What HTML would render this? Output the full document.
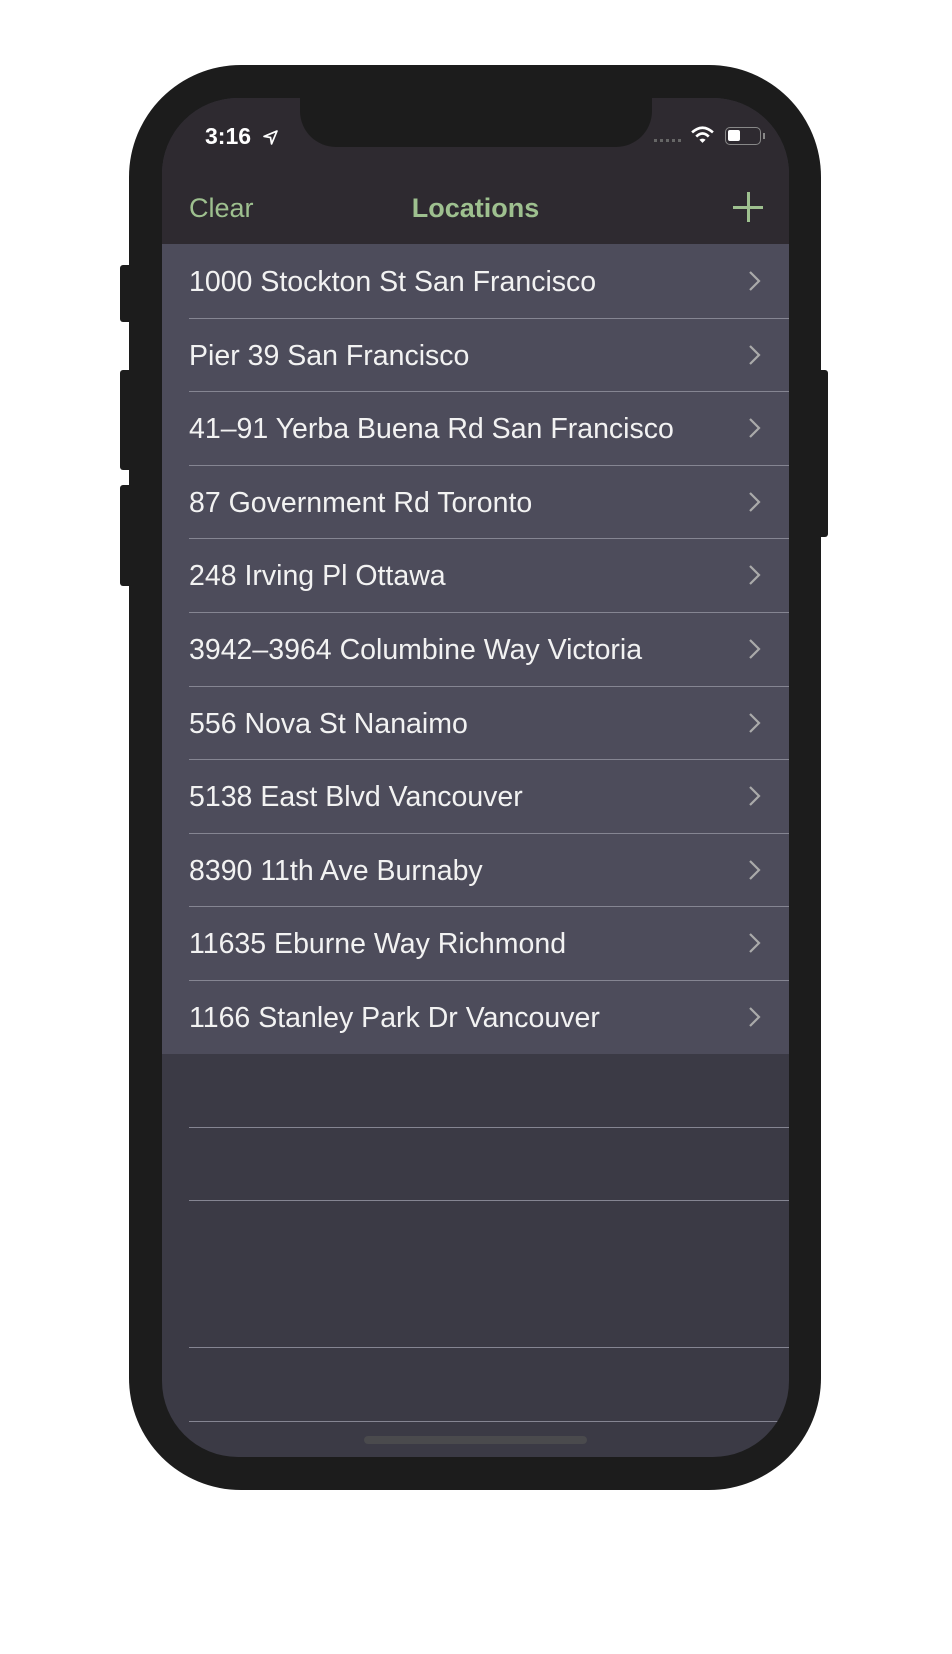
<!DOCTYPE html>
<html><head><meta charset="utf-8"><style>
*{margin:0;padding:0;box-sizing:border-box}
body{width:952px;height:1654px;background:#fff;position:relative;overflow:hidden;font-family:"Liberation Sans",sans-serif}
.abs{position:absolute}
.body{left:129px;top:65px;width:692px;height:1425px;border-radius:112px;background:#1c1c1c}
.btn{background:#1c1c1c;border-radius:3px}
.screen{left:162px;top:98px;width:627px;height:1359px;border-radius:76px;background:#3b3a45;overflow:hidden}
.top{left:0;top:0;width:627px;height:146px;background:#2e2a30}
.notch{left:138px;top:0;width:352px;height:49px;background:#1c1c1c;border-radius:0 0 36px 36px}
.row{left:0;width:627px;height:74px;background:#4d4c5b}
.row span{position:absolute;left:27px;top:22px;font-size:28.5px;color:#f2f2f2;white-space:nowrap}
.sep{left:27px;width:600px;height:1px;background:#858592}
.chev{position:absolute;left:586px;top:26px}
</style></head><body>
<div class="abs btn" style="left:120px;top:265px;width:12px;height:57px"></div>
<div class="abs btn" style="left:120px;top:370px;width:12px;height:100px"></div>
<div class="abs btn" style="left:120px;top:485px;width:12px;height:101px"></div>
<div class="abs btn" style="left:816px;top:370px;width:12px;height:167px"></div>
<div class="abs body"></div>
<div class="abs screen">
 <div class="abs top"></div>
 <div class="abs notch"></div>
 <div class="abs" style="left:43px;top:25px;font-size:23px;color:#fff;font-weight:bold">3:16</div>
 <svg class="abs" style="left:101px;top:32px" width="15" height="15" viewBox="0 0 14 14"><path d="M13 1 L1 6 L7 7 L8 13 Z" fill="none" stroke="#fff" stroke-width="1.6" stroke-linejoin="round"/></svg>
 <div class="abs" style="left:492px;top:41px;width:27px;height:3px;border-top:3px dotted #666"></div>
 <svg class="abs" style="left:528px;top:27px" width="25" height="19" viewBox="0 0 24 18"><path d="M2 7 Q12 -2 22 7" stroke="#fff" stroke-width="2.5" fill="none"/><path d="M6 11 Q12 5 18 11" stroke="#fff" stroke-width="2.5" fill="none"/><path d="M9 14 L12 17 L15 14 Q12 12 9 14Z" fill="#fff"/></svg>
 <div class="abs" style="left:563px;top:29px;width:36px;height:18px;border:1.5px solid #888;border-radius:5px"><div style="position:absolute;left:2px;top:2px;width:12px;height:11px;background:#fff;border-radius:2px"></div></div>
 <div class="abs" style="left:601px;top:35px;width:2px;height:6px;background:#888"></div>
 <div class="abs" style="left:27px;top:95px;font-size:27px;color:#9ec08f">Clear</div>
 <div class="abs" style="left:0;width:627px;text-align:center;top:95px;font-size:27px;color:#9ec08f;font-weight:bold">Locations</div>
 <div class="abs" style="left:571px;top:108px;width:30px;height:2.5px;background:#9ec08f"></div>
 <div class="abs" style="left:585px;top:94px;width:2.5px;height:30px;background:#9ec08f"></div>
 <div class="abs row" style="top:146px"><span>1000 Stockton St San Francisco</span><svg class="chev" width="14" height="22"><path d="M2 2 L11 11 L2 20" fill="none" stroke="#aaa" stroke-width="2.2"/></svg></div>
 <div class="abs row" style="top:220px"><span>Pier 39 San Francisco</span><svg class="chev" width="14" height="22"><path d="M2 2 L11 11 L2 20" fill="none" stroke="#aaa" stroke-width="2.2"/></svg></div>
 <div class="abs row" style="top:293px"><span>41–91 Yerba Buena Rd San Francisco</span><svg class="chev" width="14" height="22"><path d="M2 2 L11 11 L2 20" fill="none" stroke="#aaa" stroke-width="2.2"/></svg></div>
 <div class="abs row" style="top:367px"><span>87 Government Rd Toronto</span><svg class="chev" width="14" height="22"><path d="M2 2 L11 11 L2 20" fill="none" stroke="#aaa" stroke-width="2.2"/></svg></div>
 <div class="abs row" style="top:440px"><span>248 Irving Pl Ottawa</span><svg class="chev" width="14" height="22"><path d="M2 2 L11 11 L2 20" fill="none" stroke="#aaa" stroke-width="2.2"/></svg></div>
 <div class="abs row" style="top:514px"><span>3942–3964 Columbine Way Victoria</span><svg class="chev" width="14" height="22"><path d="M2 2 L11 11 L2 20" fill="none" stroke="#aaa" stroke-width="2.2"/></svg></div>
 <div class="abs row" style="top:588px"><span>556 Nova St Nanaimo</span><svg class="chev" width="14" height="22"><path d="M2 2 L11 11 L2 20" fill="none" stroke="#aaa" stroke-width="2.2"/></svg></div>
 <div class="abs row" style="top:661px"><span>5138 East Blvd Vancouver</span><svg class="chev" width="14" height="22"><path d="M2 2 L11 11 L2 20" fill="none" stroke="#aaa" stroke-width="2.2"/></svg></div>
 <div class="abs row" style="top:735px"><span>8390 11th Ave Burnaby</span><svg class="chev" width="14" height="22"><path d="M2 2 L11 11 L2 20" fill="none" stroke="#aaa" stroke-width="2.2"/></svg></div>
 <div class="abs row" style="top:808px"><span>11635 Eburne Way Richmond</span><svg class="chev" width="14" height="22"><path d="M2 2 L11 11 L2 20" fill="none" stroke="#aaa" stroke-width="2.2"/></svg></div>
 <div class="abs row" style="top:882px"><span>1166 Stanley Park Dr Vancouver</span><svg class="chev" width="14" height="22"><path d="M2 2 L11 11 L2 20" fill="none" stroke="#aaa" stroke-width="2.2"/></svg></div>
 <div class="abs sep" style="top:220px"></div><div class="abs sep" style="top:293px"></div><div class="abs sep" style="top:367px"></div><div class="abs sep" style="top:440px"></div><div class="abs sep" style="top:514px"></div><div class="abs sep" style="top:588px"></div><div class="abs sep" style="top:661px"></div><div class="abs sep" style="top:735px"></div><div class="abs sep" style="top:808px"></div><div class="abs sep" style="top:882px"></div>
 <div class="abs sep" style="top:1029px"></div><div class="abs sep" style="top:1102px"></div><div class="abs sep" style="top:1249px"></div><div class="abs sep" style="top:1323px;width:592px"></div>
 <div class="abs" style="left:202px;top:1338px;width:223px;height:8px;border-radius:4px;background:#4a4a4d"></div>
</div>
</body></html>
